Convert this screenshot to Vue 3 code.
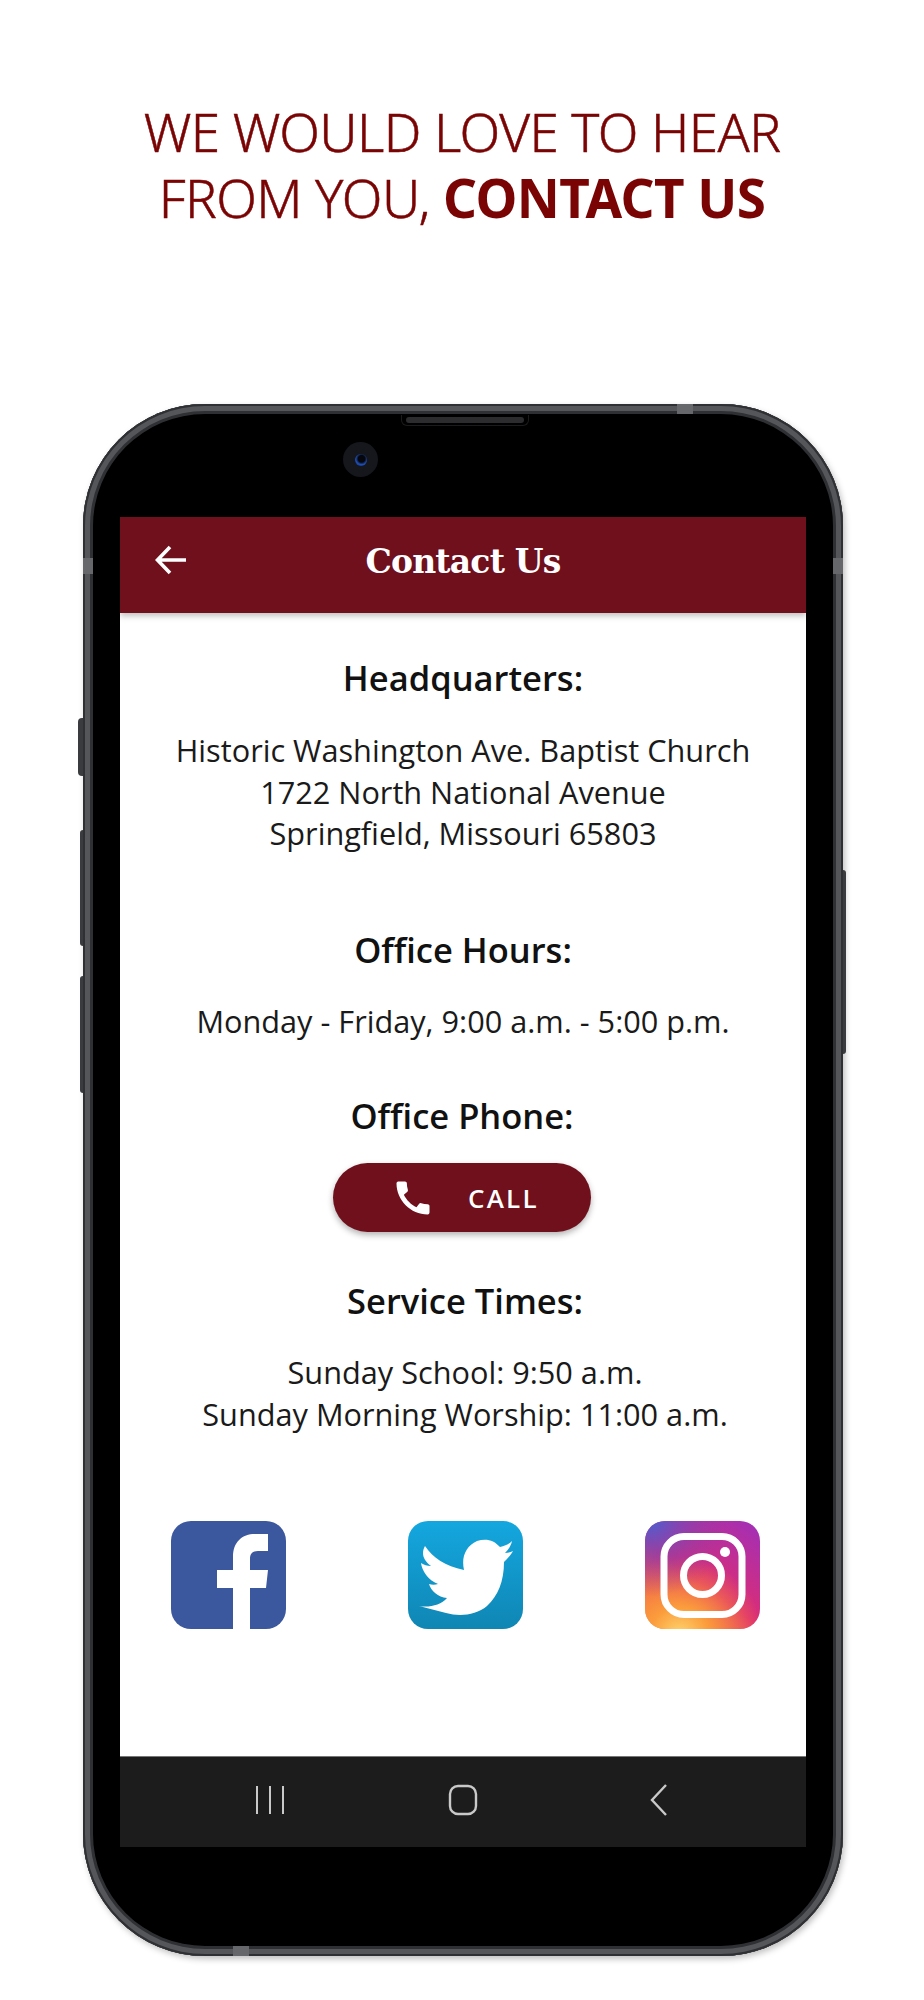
<template>
  <div class="page">
    <h1 class="headline">
      WE WOULD LOVE TO HEAR<br />FROM YOU, <strong>CONTACT US</strong>
    </h1>

    <div class="phone">
      <span class="side-key key-power"></span>
      <span class="side-key key-bixby"></span>
      <span class="side-key key-up"></span>
      <span class="side-key key-down"></span>
      <span class="band band-top"></span>
      <span class="band band-bottom"></span>
      <span class="band band-left"></span>
      <span class="band band-right"></span>
      <span class="speaker"></span>
      <span class="camera"><i></i></span>

      <div class="screen">
        <header class="app-bar">
          <svg class="back" viewBox="0 0 32 30" fill="none" stroke="#fff" stroke-width="3.6">
            <path d="M31 15H3M15 2L2.5 15L15 28" />
          </svg>
          <span class="app-title">Contact Us</span>
        </header>

        <main class="content">
          <section class="block hq">
            <h2>Headquarters:</h2>
            <p>
              Historic Washington Ave. Baptist Church<br />1722 North National Avenue<br />Springfield,
              Missouri 65803
            </p>
          </section>

          <section class="block hours">
            <h2>Office Hours:</h2>
            <p>Monday - Friday, 9:00 a.m. - 5:00 p.m.</p>
          </section>

          <section class="block phone-block">
            <h2>Office Phone:</h2>
            <button class="call">
              <svg viewBox="0 0 24 24" fill="#fff">
                <path
                  d="M20.01 15.38c-1.23 0-2.42-.2-3.53-.56-.35-.12-.74-.03-1.01.24l-1.57 1.97c-2.83-1.35-5.48-3.9-6.89-6.83l1.95-1.66c.27-.28.35-.67.24-1.02-.37-1.11-.56-2.3-.56-3.53 0-.54-.45-.99-.99-.99H4.19C3.65 3 3 3.24 3 3.99 3 13.28 10.73 21 20.01 21c.71 0 .99-.63.99-1.18v-3.45c0-.54-.45-.99-.99-.99z"
                />
              </svg>
              <span>CALL</span>
            </button>
          </section>

          <section class="block times">
            <h2>Service Times:</h2>
            <p>Sunday School: 9:50 a.m.<br />Sunday Morning Worship: 11:00 a.m.</p>
          </section>

          <div class="social">
            <svg viewBox="0 0 115 108">
              <rect width="115" height="108" rx="20" fill="#3b579d" />
              <path
                fill="#fff"
                d="M62 108V67H46V49H62V36C62 21 71 13 84 13H97V30H87C81 30 79 33 79 38V49H97L95 67H79V108Z"
              />
            </svg>
            <svg viewBox="0 0 115 108">
              <defs>
                <linearGradient id="tw" x1="0" y1="0" x2="0" y2="1">
                  <stop offset="0" stop-color="#14a7df" />
                  <stop offset="1" stop-color="#0f86b4" />
                </linearGradient>
              </defs>
              <rect width="115" height="108" rx="20" fill="url(#tw)" />
              <path
                fill="#fff"
                d="M17 25C25 37 37 45 56 49C53 36 58 25 69 20C78 17 86 19 92 26C97 25 101 23 104 20C103 25 100 29 97 32C100 32 103 31 105 30C103 34 99 38 96 41C96 60 90 75 79 85C68 94 52 96 38 92C29 90 20 87 11 85C21 87 33 84 39 77C30 76 23 70 21 63C24 64 27 64 30 63C20 59 14 50 13 42C16 44 19 45 23 45C15 39 13 32 17 25Z"
              />
            </svg>
            <svg viewBox="0 0 115 108">
              <defs>
                <linearGradient id="ig" x1="0.1" y1="1" x2="0.9" y2="0">
                  <stop offset="0" stop-color="#f9813a" />
                  <stop offset="0.45" stop-color="#de2d72" />
                  <stop offset="1" stop-color="#a42fb4" />
                </linearGradient>
                <radialGradient id="ig-warm" cx="0.3" cy="1.05" r="0.72">
                  <stop offset="0" stop-color="#fdd66f" />
                  <stop offset="0.35" stop-color="#fb9d3c" />
                  <stop offset="1" stop-color="#f9813a" stop-opacity="0" />
                </radialGradient>
                <radialGradient id="ig-cool" cx="0.05" cy="0" r="0.7">
                  <stop offset="0" stop-color="#4c5fd0" />
                  <stop offset="1" stop-color="#8a33b0" stop-opacity="0" />
                </radialGradient>
              </defs>
              <rect width="115" height="108" rx="20" fill="url(#ig)" />
              <rect width="115" height="108" rx="20" fill="url(#ig-warm)" />
              <rect width="115" height="108" rx="20" fill="url(#ig-cool)" />
              <rect x="19" y="15.5" width="78" height="78" rx="20" fill="none" stroke="#fff" stroke-width="7" />
              <circle cx="57.5" cy="54.5" r="19" fill="none" stroke="#fff" stroke-width="7" />
              <circle cx="80" cy="31" r="5" fill="#fff" />
            </svg>
          </div>
        </main>

        <nav class="nav-bar">
          <svg class="nav-icon" viewBox="0 0 30 32" fill="none" stroke="#c9c9c9" stroke-width="2">
            <path d="M2 2V30M15 2V30M28 2V30" />
          </svg>
          <svg class="nav-icon" viewBox="0 0 30 32" fill="none" stroke="#c9c9c9" stroke-width="2.4">
            <rect x="2" y="2" width="26" height="28" rx="8" />
          </svg>
          <svg class="nav-icon" viewBox="0 0 30 32" fill="none" stroke="#c9c9c9" stroke-width="2.4">
            <path d="M25 1L11 16L25 31" />
          </svg>
        </nav>
      </div>
    </div>
  </div>
</template>

<script setup>
</script>

<style>
body {
  background: #fff;
}
</style>

<style scoped>
.page {
  width: 924px;
  height: 2000px;
  overflow: hidden;
  background: #fff;
  font-family: "Open Sans", sans-serif;
}

.headline {
  margin: 0;
  padding-top: 99px;
  height: 404px;
  box-sizing: border-box;
  text-align: center;
  font-family: "Noto Sans", sans-serif;
  font-weight: 300;
  font-size: 53px;
  line-height: 66px;
  letter-spacing: -0.6px;
  color: #7a0404;
  -webkit-text-stroke: 0.5px #7a0404;
}

.headline strong {
  font-weight: 700;
  -webkit-text-stroke: 0;
}

.phone {
  position: relative;
  width: 760px;
  height: 1552px;
  margin-left: 83px;
  box-sizing: border-box;
  padding: 113px 37px 109px;
  border-radius: 122px;
  background: #000;
  box-shadow: inset 0 0 0 2px #2f3033, inset 0 0 0 7px #55565a, inset 0 0 0 10px #2f3033,
    2px 3px 6px rgba(0, 0, 0, 0.25);
}

.side-key {
  position: absolute;
  background: #3a3b3f;
  border-radius: 4px 0 0 4px;
}

.key-power {
  left: -5px;
  top: 314px;
  width: 5px;
  height: 58px;
}

.key-bixby {
  left: -3px;
  top: 426px;
  width: 3px;
  height: 116px;
}

.key-up {
  left: -3px;
  top: 572px;
  width: 3px;
  height: 117px;
}

.key-down {
  right: -3px;
  top: 466px;
  width: 3px;
  height: 184px;
  border-radius: 0 4px 4px 0;
}

.band {
  position: absolute;
  background: #66676b;
}

.band-top {
  top: 0;
  left: 594px;
  width: 16px;
  height: 10px;
}

.band-bottom {
  bottom: 0;
  left: 150px;
  width: 16px;
  height: 10px;
}

.band-left {
  left: 0;
  top: 154px;
  width: 10px;
  height: 16px;
}

.band-right {
  right: 0;
  top: 154px;
  width: 10px;
  height: 16px;
}

.speaker {
  position: absolute;
  top: 11px;
  left: 318px;
  width: 126px;
  height: 10px;
  border-radius: 0 0 6px 6px;
  border: 1px solid #1b1b1d;
  border-top: 0;
}

.speaker::after {
  content: "";
  position: absolute;
  left: 4px;
  right: 4px;
  top: 2px;
  height: 6px;
  border-radius: 3px;
  background: #2c2c2e;
}

.camera {
  position: absolute;
  top: 38px;
  left: 260px;
  width: 35px;
  height: 35px;
  border-radius: 50%;
  background: #15171d;
  display: flex;
  align-items: center;
  justify-content: center;
}

.camera i {
  width: 12px;
  height: 12px;
  border-radius: 50%;
  background: radial-gradient(circle at 55% 40%, #05070d 35%, #1f4fb8 60%, #0b1a40 100%);
}

.screen {
  height: 100%;
  background: #fff;
  display: flex;
  flex-direction: column;
}

.app-bar {
  position: relative;
  height: 96px;
  flex: none;
  display: flex;
  align-items: center;
  justify-content: center;
  background: #6f101c;
  box-shadow: 0 3px 6px rgba(0, 0, 0, 0.25);
}

.back {
  position: absolute;
  left: 35px;
  top: 28px;
  width: 32px;
  height: 30px;
}

.app-title {
  font-family: "DejaVu Serif", serif;
  font-weight: 700;
  font-size: 33px;
  line-height: 90px;
  height: 90px;
  margin-bottom: 6px;
  letter-spacing: -0.8px;
  color: #fff;
}

.content {
  flex: 1;
  text-align: center;
  color: #1a1a1a;
}

.block h2 {
  margin: 0;
  font-size: 34.5px;
  line-height: 44px;
  font-weight: 600;
  color: #111;
}

.block p {
  margin: 0;
  font-size: 30.7px;
  line-height: 41.6px;
}

.hq {
  padding-top: 43px;
}

.hq p {
  margin-top: 30px;
}

.hours {
  padding-top: 73px;
}

.hours p {
  margin-top: 29px;
}

.phone-block {
  padding-top: 52px;
  padding-right: 2px;
}

.call {
  display: flex;
  align-items: center;
  width: 258px;
  height: 69px;
  margin: 25px auto 0;
  padding: 0 0 0 58px;
  border: 0;
  border-radius: 35px;
  background: #6f101c;
  color: #fff;
  font-family: "Open Sans", sans-serif;
  font-size: 26px;
  font-weight: 600;
  letter-spacing: 2.2px;
  box-shadow: 0 3px 6px rgba(0, 0, 0, 0.3);
}

.call svg {
  width: 44px;
  height: 44px;
  flex: none;
}

.call span {
  margin-left: 33px;
}

.times {
  padding-top: 47px;
  padding-left: 4px;
}

.times p {
  margin-top: 29px;
}

.social {
  display: flex;
  justify-content: space-between;
  padding: 85px 46px 0 51px;
}

.social svg {
  width: 115px;
  height: 108px;
}

.nav-bar {
  height: 91px;
  flex: none;
  box-sizing: border-box;
  border-top: 1px solid #777;
  padding-bottom: 5px;
  background: #1c1c1c;
  display: flex;
  align-items: center;
  justify-content: center;
  gap: 163px;
}

.nav-icon {
  width: 30px;
  height: 32px;
}
</style>
